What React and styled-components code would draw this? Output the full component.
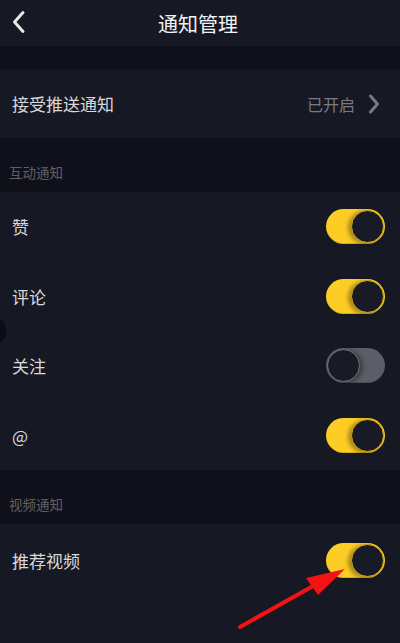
import React from "react";
import styled, {createGlobalStyle} from "styled-components";

const Global = createGlobalStyle`
    html, body {
        margin: 0;
        padding: 0;
        background: #161823;
    }
    body {
        font-family: "Noto Sans CJK SC", "Noto Sans", sans-serif;
    }
`;

const Page = styled.div`
    position: relative;
    width: 400px;
    height: 643px;
    overflow: hidden;
    background: #161823;
    display: flex;
    flex-direction: column;
`;

const Header = styled.div`
    height: 46px;
    display: flex;
    align-items: center;
    justify-content: center;
    position: relative;
    color: #f2f2f2;
    font-size: 20px;
    padding-right: 4px;
    box-sizing: border-box;
`;

const BackButton = styled.div`
    position: absolute;
    left: 11px;
    top: 10px;
    width: 18px;
    height: 24px;
    display: flex;
    align-items: center;
`;

const Band = styled.div`
    background: #0f1019;
    height: ${(p) => p.h}px;
    display: flex;
    align-items: center;
    padding-left: 9px;
    padding-top: ${(p) => (p.label ? 13 : 0)}px;
    box-sizing: border-box;
    color: #5f6068;
    font-size: 13.5px;
`;

const Row = styled.div`
    height: ${(p) => p.h || 69.5}px;
    display: flex;
    align-items: center;
    justify-content: space-between;
    padding: 0 ${(p) => p.pr || 15}px 0 12px;
    color: #d9d9dc;
    font-size: 17px;
`;

const RightSide = styled.div`
    display: flex;
    align-items: center;
    gap: 13px;
    color: #7a7b82;
    font-size: 16px;
`;

const Track = styled.div`
    width: 59px;
    height: 35px;
    border-radius: 18px;
    box-sizing: border-box;
    background: ${(p) => (p.on ? "#fdcd26" : "#5c5d66")};
    display: flex;
    align-items: center;
    justify-content: ${(p) => (p.on ? "flex-end" : "flex-start")};
    padding: 1px;
    box-shadow: inset 0 -1px 0 rgba(0, 0, 0, 0.15);
`;

const Knob = styled.div`
    width: 31px;
    height: 31px;
    border-radius: 50%;
    background: #181a25;
    border: 1px solid ${(p) => (p.on ? "#d9a914" : "#74757c")};
    box-shadow: ${(p) => (p.on ? "-3px 1px 4px rgba(0,0,0,0.35)" : "3px 1px 4px rgba(0,0,0,0.35)")};
`;

const EdgeDot = styled.div`
    position: absolute;
    left: -6px;
    top: 320px;
    width: 12px;
    height: 22px;
    border-radius: 50%;
    background: #0c0d14;
`;

const Arrow = styled.svg`
    position: absolute;
    left: 0;
    top: 0;
    pointer-events: none;
`;

const Toggle = ({on}) => (
    <Track on={on ? 1 : 0}>
        <Knob on={on ? 1 : 0} />
    </Track>
);

export default function App() {
    return (
        <Page>
            <Global />
            <Header>
                <BackButton>
                    <svg width="16" height="24" viewBox="0 0 16 24">
                        <path d="M12 2.5 L3.5 12 L12 21.5" fill="none" stroke="#e8e8ea" strokeWidth="3" strokeLinecap="round" strokeLinejoin="round" />
                    </svg>
                </BackButton>
                通知管理
            </Header>
            <Band h={23} />
            <Row h={69} pr={20}>
                <span>接受推送通知</span>
                <RightSide>
                    已开启
                    <svg width="12" height="22" viewBox="0 0 12 22">
                        <path d="M2.5 3 L9.5 11 L2.5 19" fill="none" stroke="#7a7b82" strokeWidth="3" strokeLinecap="round" strokeLinejoin="round" />
                    </svg>
                </RightSide>
            </Row>
            <Band h={54} label>互动通知</Band>
            <Row>
                <span>赞</span>
                <Toggle on />
            </Row>
            <Row>
                <span>评论</span>
                <Toggle on />
            </Row>
            <Row>
                <span>关注</span>
                <Toggle />
            </Row>
            <Row>
                <span>@</span>
                <Toggle on />
            </Row>
            <Band h={54} label>视频通知</Band>
            <Row h={72}>
                <span>推荐视频</span>
                <Toggle on />
            </Row>
            <EdgeDot />
            <Arrow width="400" height="643" viewBox="0 0 400 643">
                <line x1="240" y1="627" x2="315" y2="585" stroke="#f51212" strokeWidth="4" strokeLinecap="round" />
                <polygon points="345,569 306,578 318,595" fill="#f51212" />
            </Arrow>
        </Page>
    );
}
